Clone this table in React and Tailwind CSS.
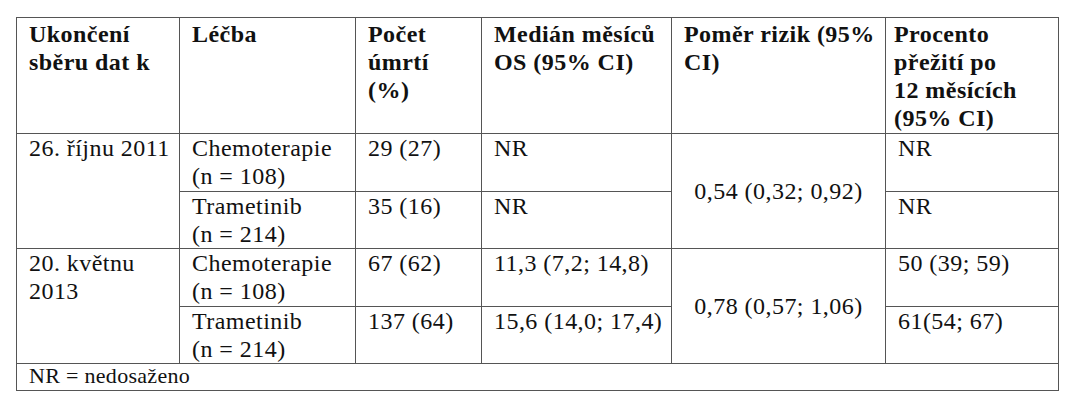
const rows = [
  {
    date: "26. říjnu 2011",
    hr: "0,54 (0,32; 0,92)",
    arms: [
      { name: "Chemoterapie", n: "(n = 108)", deaths: "29 (27)", os: "NR", surv: "NR", h: "h-[58px]" },
      { name: "Trametinib", n: "(n = 214)", deaths: "35 (16)", os: "NR", surv: "NR", h: "h-[57px]" },
    ],
  },
  {
    date: "20. květnu 2013",
    hr: "0,78 (0,57; 1,06)",
    arms: [
      { name: "Chemoterapie", n: "(n = 108)", deaths: "67 (62)", os: "11,3 (7,2; 14,8)", surv: "50 (39; 59)", h: "h-[58px]" },
      { name: "Trametinib", n: "(n = 214)", deaths: "137 (64)", os: "15,6 (14,0; 17,4)", surv: "61(54; 67)", h: "h-[57px]" },
    ],
  },
];

const cell = "border border-[#555] font-['Liberation_Serif',serif] text-[24px] leading-[28px] tracking-[0.45px] text-[#111]";
const th = `${cell} align-top text-left font-bold pl-3 pt-[2px]`;
const td = `${cell} align-top text-left font-normal pl-3`;

const App = () => {
  return (
    <div className="min-h-[410px] w-[1080px] bg-white pl-[16px] pt-[17px] font-['Liberation_Serif',serif] text-[24px] leading-[28px] text-[#111]">
      <table className="table-fixed border-collapse w-[1042px] font-['Liberation_Serif',serif] text-[24px] leading-[28px]">
        <colgroup>
          <col className="w-[163px]" />
          <col className="w-[176px]" />
          <col className="w-[126px]" />
          <col className="w-[190px]" />
          <col className="w-[214px]" />
          <col className="w-[173px]" />
        </colgroup>
        <thead>
          <tr className="h-[116px]">
            <th className={th}>
              Ukončení
              <br />
              sběru dat k
            </th>
            <th className={th}>Léčba</th>
            <th className={th}>
              Počet
              <br />
              úmrtí
              <br />
              (%)
            </th>
            <th className={th}>
              Medián měsíců
              <br />
              OS (95% CI)
            </th>
            <th className={th}>
              Poměr rizik (95%
              <br />
              CI)
            </th>
            <th className={`${cell} align-top text-left font-bold pl-2 pt-[2px]`}>
              Procento
              <br />
              přežití po
              <br />
              12 měsících
              <br />
              (95% CI)
            </th>
          </tr>
        </thead>
        <tbody>
          {rows.map((group) =>
            group.arms.map((arm, i) => (
              <tr key={group.date + arm.name} className={arm.h}>
                {i === 0 && (
                  <td rowSpan={2} className={td}>
                    {group.date === "20. květnu 2013" ? (
                      <>
                        20. květnu
                        <br />
                        2013
                      </>
                    ) : (
                      group.date
                    )}
                  </td>
                )}
                <td className={td}>
                  {arm.name}
                  <br />
                  {arm.n}
                </td>
                <td className={td}>{arm.deaths}</td>
                <td className={td}>{arm.os}</td>
                {i === 0 && (
                  <td rowSpan={2} className={`${cell} align-middle text-center font-normal`}>
                    {group.hr}
                  </td>
                )}
                <td className={td}>{arm.surv}</td>
              </tr>
            ))
          )}
          <tr className="h-[27px]">
            <td colSpan={6} className="border border-[#555] font-['Liberation_Serif',serif] text-[22px] leading-[24px] tracking-[0.3px] text-[#111] align-top pl-3">
              NR = nedosaženo
            </td>
          </tr>
        </tbody>
      </table>
    </div>
  );
};

export default App;
